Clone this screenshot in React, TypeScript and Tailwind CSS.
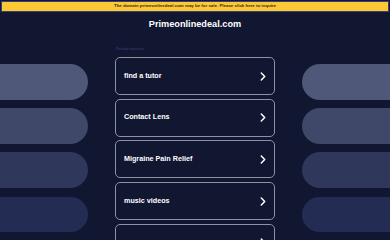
const searches = ["find a tutor", "Contact Lens", "Migraine Pain Relief", "music videos", ""];

const pills = ["bg-[#4f5878]", "bg-[#3f4869]", "bg-[#2f375b]", "bg-[#232c52]"];

function Chevron() {
  return (
    <svg width="6" height="9" viewBox="0 0 6 9" fill="none" className="shrink-0">
      <path d="M1.3 1 L4.7 4.5 L1.3 8" stroke="#ffffff" strokeWidth="1.5" strokeLinecap="round" strokeLinejoin="round" />
    </svg>
  );
}

function PillColumn({ side }: { side: "left" | "right" }) {
  return (
    <div className="flex w-[88px] shrink-0 flex-col gap-[8.7px] pt-[64px]">
      {pills.map((c) => (
        <div
          key={c}
          className={`h-[35.5px] ${c} ${side === "left" ? "rounded-r-full" : "rounded-l-full"}`}
        />
      ))}
    </div>
  );
}

export default function App() {
  return (
    <div
      className="h-[240px] w-[390px] overflow-hidden bg-[#111631]"
      style={{ fontFamily: '"Liberation Sans", Arial, sans-serif' }}
    >
      <div className="mx-[1px] mt-[1px] flex h-[11px] items-center justify-center border border-[#3a3f78] bg-[#fcc935]">
        <span className="text-[4.4px] font-bold leading-none text-[#2b2b2b]">
          The domain primeonlinedeal.com may be for sale. Please click here to inquire
        </span>
      </div>

      <div className="flex justify-center pt-[6px]">
        <h1 className="text-[9.2px] font-bold leading-[12px] text-white">Primeonlinedeal.com</h1>
      </div>

      {/* main row starts at page top so columns line up by their own padding */}
      <div className="-mt-[30px] flex justify-center gap-[27px]">
        <PillColumn side="left" />

        <div className="flex w-[160px] shrink-0 flex-col pt-[47px]">
          <p className="mb-[5px] pl-[1px] text-[3.6px] leading-[5px] text-[#3d4470]">Related searches</p>
          <div className="flex flex-col gap-[3.7px]">
            {searches.map((s, i) => (
              <div
                key={i}
                className="flex h-[38px] items-center justify-between rounded-[5px] border-[1.4px] border-[#8f92a0] pl-[8px] pr-[8px]"
              >
                <span className="text-[7.2px] font-bold text-white">{s}</span>
                <Chevron />
              </div>
            ))}
          </div>
        </div>

        <PillColumn side="right" />
      </div>
    </div>
  );
}
